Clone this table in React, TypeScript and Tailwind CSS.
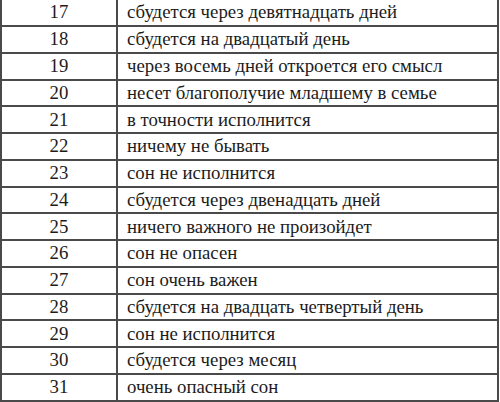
const ROWS = [
  { n: 17, text: 'сбудется через девятнадцать дней' },
  { n: 18, text: 'сбудется на двадцатый день' },
  { n: 19, text: 'через восемь дней откроется его смысл' },
  { n: 20, text: 'несет благополучие младшему в семье' },
  { n: 21, text: 'в точности исполнится' },
  { n: 22, text: 'ничему не бывать' },
  { n: 23, text: 'сон не исполнится' },
  { n: 24, text: 'сбудется через двенадцать дней' },
  { n: 25, text: 'ничего важного не произойдет' },
  { n: 26, text: 'сон не опасен' },
  { n: 27, text: 'сон очень важен' },
  { n: 28, text: 'сбудется на двадцать четвертый день' },
  { n: 29, text: 'сон не исполнится' },
  { n: 30, text: 'сбудется через месяц' },
  { n: 31, text: 'очень опасный сон' },
]

export default function App() {
  return (
    <div className="w-[500px] h-[402px] bg-white overflow-hidden">
      <div className="w-[499px] border-x-2 border-[#4a4a4a] font-['Liberation_Serif','Times_New_Roman',serif] text-[18.8px] text-[#1c1c1c]">
        {ROWS.map((r, i) => (
          <div
            key={r.n}
            className={`flex border-b-2 border-[#4a4a4a] ${i === 0 ? 'h-[27px]' : 'h-[26.77px]'}`}
          >
            <div className="w-[116px] shrink-0 border-r-2 border-[#4a4a4a] flex items-center justify-center">
              {r.n}
            </div>
            <div className="flex-1 flex items-center pl-[9px]">{r.text}</div>
          </div>
        ))}
      </div>
    </div>
  )
}
